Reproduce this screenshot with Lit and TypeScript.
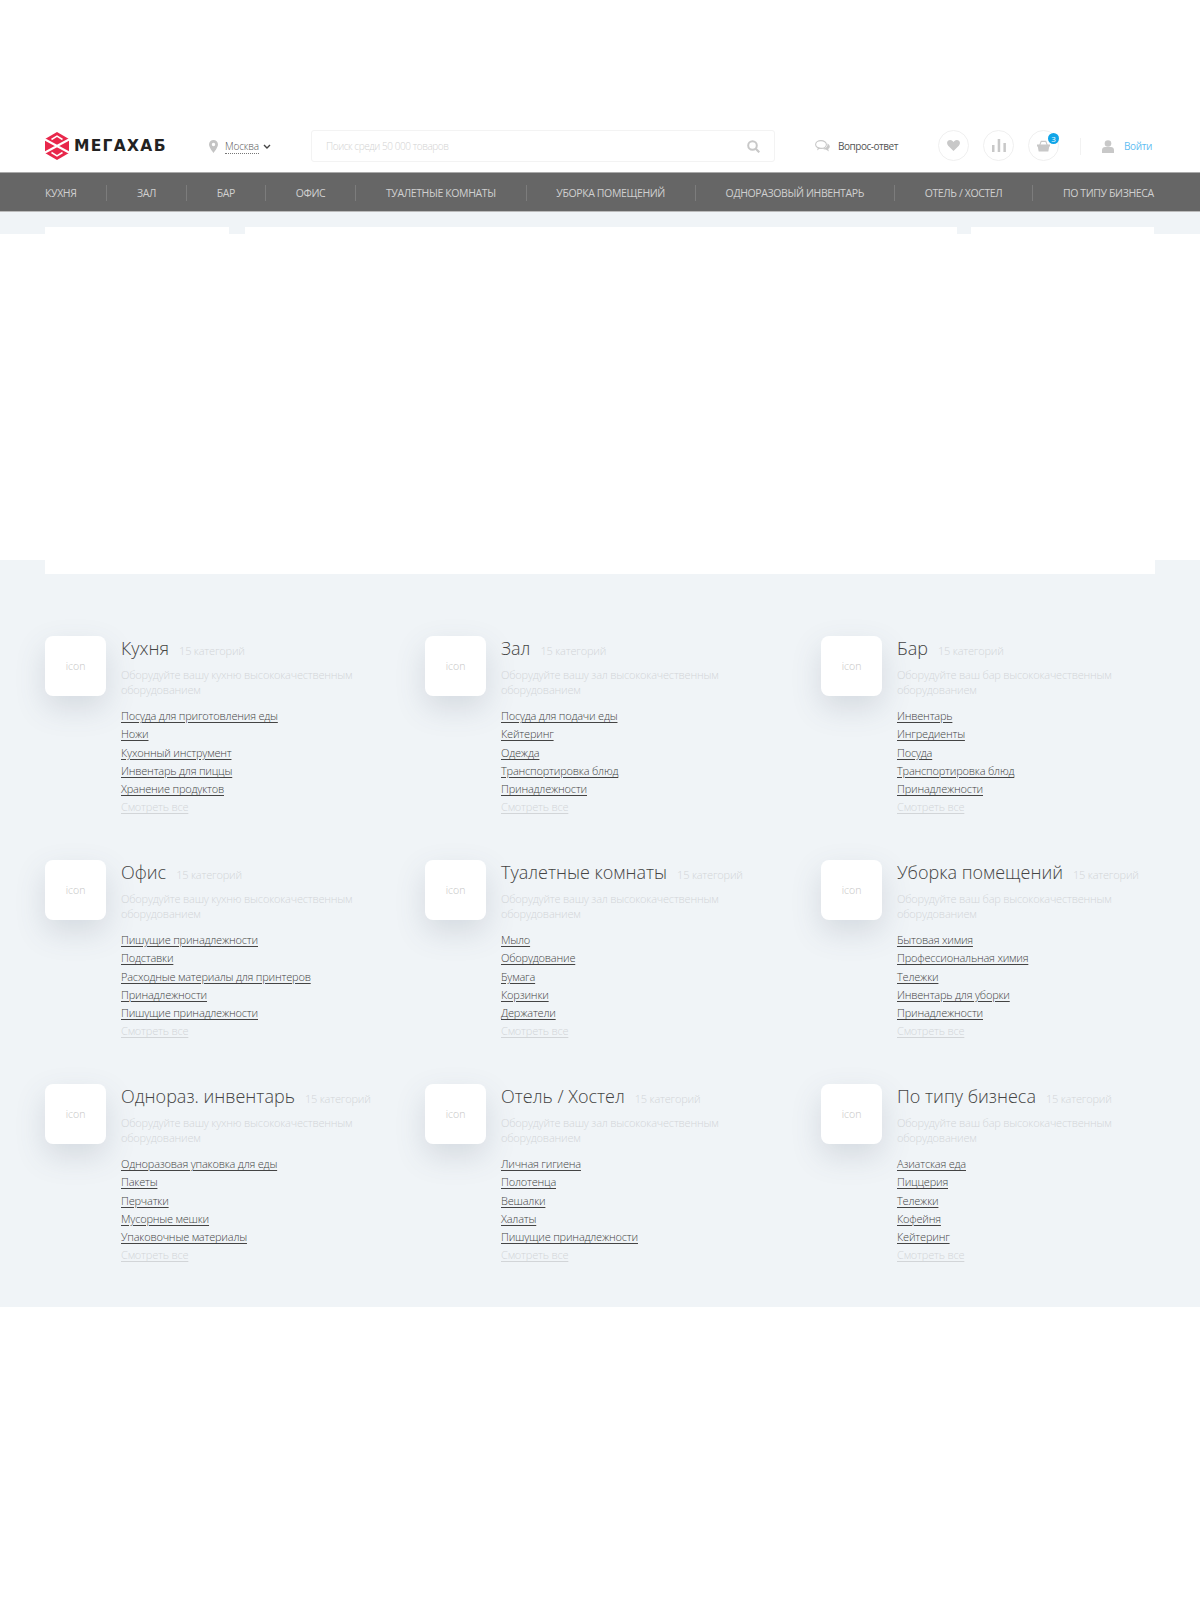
import { LitElement, html, css, svg } from "lit";
import { customElement } from "lit/decorators.js";

const CARDS = [
  { t: "Кухня", d: "Оборудуйте вашу кухню высококачественным оборудованием", l: ["Посуда для приготовления еды", "Ножи", "Кухонный инструмент", "Инвентарь для пиццы", "Хранение продуктов"] },
  { t: "Зал", d: "Оборудуйте вашу зал высококачественным оборудованием", l: ["Посуда для подачи еды", "Кейтеринг", "Одежда", "Транспортировка блюд", "Принадлежности"] },
  { t: "Бар", d: "Оборудуйте ваш бар высококачественным оборудованием", l: ["Инвентарь", "Ингредиенты", "Посуда", "Транспортировка блюд", "Принадлежности"] },
  { t: "Офис", d: "Оборудуйте вашу кухню высококачественным оборудованием", l: ["Пишущие принадлежности", "Подставки", "Расходные материалы для принтеров", "Принадлежности", "Пишущие принадлежности"] },
  { t: "Туалетные комнаты", d: "Оборудуйте вашу зал высококачественным оборудованием", l: ["Мыло", "Оборудование", "Бумага", "Корзинки", "Держатели"] },
  { t: "Уборка помещений", d: "Оборудуйте ваш бар высококачественным оборудованием", l: ["Бытовая химия", "Профессиональная химия", "Тележки", "Инвентарь для уборки", "Принадлежности"] },
  { t: "Однораз. инвентарь", d: "Оборудуйте вашу кухню высококачественным оборудованием", l: ["Одноразовая упаковка для еды", "Пакеты", "Перчатки", "Мусорные мешки", "Упаковочные материалы"] },
  { t: "Отель / Хостел", d: "Оборудуйте вашу зал высококачественным оборудованием", l: ["Личная гигиена", "Полотенца", "Вешалки", "Халаты", "Пишущие принадлежности"] },
  { t: "По типу бизнеса", d: "Оборудуйте ваш бар высококачественным оборудованием", l: ["Азиатская еда", "Пиццерия", "Тележки", "Кофейня", "Кейтеринг"] },
];
const NAV = ["Кухня", "Зал", "Бар", "Офис", "Туалетные комнаты", "Уборка помещений", "Одноразовый инвентарь", "Отель / Хостел", "По типу бизнеса"];

const logo = svg`<svg width="24" height="28" viewBox="0 0 24 28"><path fill="#e8274b" d="M12 0L24 7v14l-12 7L0 21V7z"/><path fill="none" stroke="#fff" stroke-width="2.3" d="M-1 7L12 14 25 7M-1 21L12 14 25 21"/><path fill="none" stroke="#fff" stroke-width="1.5" d="M6.500 7.500L12 4.200l5.500 3.300M6.500 20.500L12 23.800l5.500-3.300"/></svg>`;

@customElement("app-root")
export class AppRoot extends LitElement {
  static styles = css`
    :host { display: block; width: 1200px; height: 1600px; background: #fff; font-family: "Open Sans", "Noto Sans", sans-serif; font-weight: 300; color: #444; }
    * { box-sizing: border-box; }
    .header { height: 172px; padding: 130px 45px 0; display: flex; align-items: flex-start; }
    .header > * { flex: none; }
    .logo { display: flex; align-items: center; gap: 5px; width: 164px; height: 32px; }
    .logo-text { font: 700 15.500px "DejaVu Sans", sans-serif; letter-spacing: 1.300px; color: #222; }
    .city { display: flex; align-items: center; width: 102px; height: 32px; padding-top: 1px; font-size: 10px; letter-spacing: -0.15px; color: #555; }
    .city-pin { margin-right: 7px; }
    .city-name { border-bottom: 1px dotted #777; line-height: 13px; margin-right: 4px; }
    .search { width: 464px; height: 32px; border: 1px solid #f3f3f3; border-radius: 3px; display: flex; align-items: center; justify-content: space-between; padding: 0 14px; font-size: 10px; letter-spacing: -0.43px; color: #d2d2d2; }
    .faq { margin-left: 40px; width: 123px; height: 32px; display: flex; align-items: center; gap: 8px; font-size: 10px; font-weight: 500; letter-spacing: -0.47px; color: #555; }
    .round { width: 31px; height: 31px; border: 1px solid #f0f0f0; border-radius: 50%; display: flex; align-items: center; justify-content: center; margin-right: 14px; position: relative; }
    .badge { position: absolute; top: 2px; right: -1px; width: 11px; height: 11px; border-radius: 50%; background: #10a5e8; color: #fff; font-size: 8px; line-height: 11px; text-align: center; font-weight: 400; }
    .vr { width: 1px; height: 17px; background: #f2f2f2; margin: 8px 21px 0 7px; }
    .login { display: flex; align-items: center; gap: 10px; height: 32px; font-size: 10px; font-weight: 500; letter-spacing: -0.4px; color: #62bdf2; }
    .nav { height: 40px; background: #666; border-top: 1px solid #aaa; border-bottom: 1px solid #bbb; padding: 1px 46px 0 45px; display: flex; align-items: center; justify-content: space-between; font-size: 10.500px; color: #d0d0d0; text-transform: uppercase; font-weight: 400; letter-spacing: -0.38px; }
    .sep { width: 1px; height: 16px; background: #7c7c7c; }
    .page { background: #f0f4f7; height: 1095px; padding-top: 15px; }
    .top { display: flex; height: 7px; padding: 0 45px; }
    .top i { display: block; background: #fff; }
    .t1 { width: 184px; margin-right: 16px; }
    .t2 { width: 712px; margin-right: 14px; }
    .t3 { width: 183px; }
    .band { height: 326px; background: #fff; }
    .band-foot { height: 14px; margin: 0 45px; background: #fff; }
    .grid { display: grid; grid-template-columns: 380px 396px 1fr; grid-auto-rows: 224px; padding: 61px 0 0 45px; }
    .card { display: flex; align-items: flex-start; }
    .icon { flex: none; width: 61px; height: 60px; margin-top: 1px; border-radius: 8px; background: #fff; box-shadow: 0 12px 30px rgba(80,90,110,.17); display: flex; align-items: center; justify-content: center; font-size: 10.500px; color: #c4c4c4; margin-right: 15px; }
    .head { display: flex; align-items: baseline; gap: 10px; height: 28px; }
    .title { font-size: 18px; line-height: 26px; color: #444; white-space: nowrap; }
    .count { font-size: 11px; letter-spacing: -0.2px; color: #d2d5d8; white-space: nowrap; }
    .desc { font-size: 11px; letter-spacing: -0.2px; line-height: 14.500px; color: #d2d5d8; width: 250px; margin: 5px 0 10px; }
    .links { display: flex; flex-direction: column; align-items: flex-start; }
    .links a { font-size: 11px; letter-spacing: -0.2px; line-height: 18.300px; color: #444; text-decoration: underline; text-underline-offset: 2px; white-space: nowrap; }
    .links a.more { color: #d2d5d8; }
  `;

  render() {
    return html`
      <div class="header">
        <div class="logo">${logo}<span class="logo-text">МЕГАХАБ</span></div>
        <div class="city">
          <svg class="city-pin" width="9" height="13" viewBox="0 0 9 13"><path fill="#c4c4c4" fill-rule="evenodd" d="M4.500 0A4.500 4.500 0 0 0 0 4.500C0 7.500 4.500 13 4.500 13S9 7.500 9 4.500A4.500 4.500 0 0 0 4.500 0zm0 6.200a1.700 1.700 0 1 1 0-3.400 1.700 1.700 0 0 1 0 3.400z"/></svg>
          <span class="city-name">Москва</span>
          <svg width="8" height="6" viewBox="0 0 8 6"><path fill="none" stroke="#444" stroke-width="1.400" d="M1 1l3 3 3-3"/></svg>
        </div>
        <div class="search">
          <span>Поиск среди 50 000 товаров</span>
          <svg width="13" height="13" viewBox="0 0 13 13"><circle cx="5.500" cy="5.500" r="4.300" fill="none" stroke="#c8c8c8" stroke-width="2"/><path stroke="#c8c8c8" stroke-width="2.200" d="M8.700 8.700l3.600 3.600"/></svg>
        </div>
        <div class="faq">
          <svg width="15" height="12" viewBox="0 0 15 12"><ellipse cx="6" cy="4.500" rx="5.400" ry="3.900" fill="#fff" stroke="#c8c8c8" stroke-width="1.100"/><path fill="#c8c8c8" d="M3 7.500L2 10.500l3.500-2.400zM12 3.400c1.800.7 2.800 1.800 2.800 3.200 0 1-.6 1.900-1.600 2.500l.7 2.400-3-1.900c-1.400 0-2.700-.3-3.600-1 2.800 0 5.200-1.600 5.200-3.800 0-.4 0-.9-.5-1.400z"/></svg>
          <span>Вопрос-ответ</span>
        </div>
        <div class="round"><svg width="13" height="11" viewBox="0 0 14 12"><path fill="#c8c8c8" d="M7 12L1.200 6.200C-.4 4.600-.4 2.200 1 .9 2.400-.4 4.600-.2 6 1.100L7 2.200l1-1.100C9.400-.2 11.600-.4 13 .9c1.400 1.300 1.400 3.700-.2 5.300z"/></svg></div>
        <div class="round"><svg width="14" height="13" viewBox="0 0 14 13"><path fill="#c8c8c8" d="M0 6h2.500v7H0zM5.700 0h2.500v13H5.700zM11.400 4h2.500v9h-2.500z"/></svg></div>
        <div class="round">
          <svg width="13" height="12" viewBox="0 0 14 12"><path fill="none" stroke="#c8c8c8" stroke-width="1.200" d="M3 5l1.500-4h5L11 5"/><path fill="#c8c8c8" d="M0 4.500h14V6.500h-.8L12.200 12H1.800L.8 6.500H0z"/></svg>
          <span class="badge">3</span>
        </div>
        <div class="vr"></div>
        <div class="login">
          <svg width="12" height="13" viewBox="0 0 12 13"><circle cx="6" cy="3.500" r="3.300" fill="#c8c8c8"/><path fill="#c8c8c8" d="M0 13V10c0-2 1.500-3 3-3h6c1.500 0 3 1 3 3v3z"/></svg>
          <span>Войти</span>
        </div>
      </div>
      <nav class="nav">
        ${NAV.map((n, i) => html`${i ? html`<i class="sep"></i>` : ""}<span>${n}</span>`)}
      </nav>
      <div class="page">
        <div class="top"><i class="t1"></i><i class="t2"></i><i class="t3"></i></div>
        <div class="band"></div>
        <div class="band-foot"></div>
        <div class="grid">
          ${CARDS.map(c => html`
            <div class="card">
              <div class="icon">icon</div>
              <div>
                <div class="head"><span class="title">${c.t}</span><span class="count">15 категорий</span></div>
                <div class="desc">${c.d}</div>
                <div class="links">
                  ${c.l.map(x => html`<a>${x}</a>`)}
                  <a class="more">Смотреть все</a>
                </div>
              </div>
            </div>`)}
        </div>
      </div>
    `;
  }
}
